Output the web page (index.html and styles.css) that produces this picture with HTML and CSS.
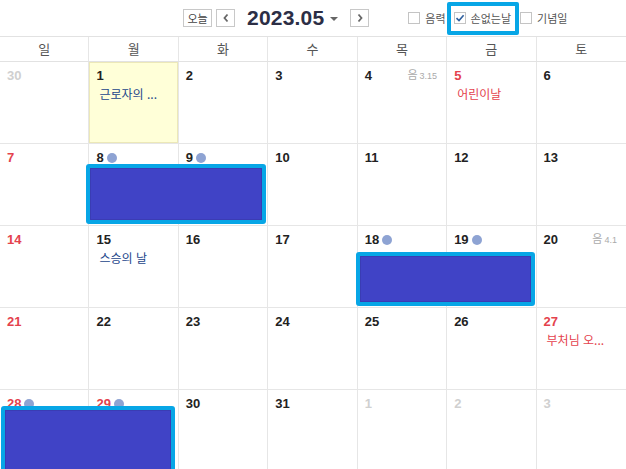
FILE: index.html
```html
<!DOCTYPE html>
<html lang="ko">
<head>
    <meta charset="UTF-8">
    <title>2023.05 달력</title>
    <link rel="stylesheet" href="styles.css">
</head>
<body>
    <div class="toolbar">
        <button class="btn today">오늘</button>
        <button class="btn arrow prev"><svg width="8" height="10" viewBox="0 0 8 10"><path d="M5.5 1.5 L2.5 5 L5.5 8.5" fill="none" stroke="#666" stroke-width="1.8"/></svg></button>
        <span class="title">2023.05</span>
        <span class="caret"></span>
        <button class="btn arrow next"><svg width="8" height="10" viewBox="0 0 8 10"><path d="M2.5 1.5 L5.5 5 L2.5 8.5" fill="none" stroke="#666" stroke-width="1.8"/></svg></button>
        <div class="options">
            <label class="opt"><span class="box"></span>음력</label>
            <label class="opt focus"><span class="box checked">
                <svg width="10" height="10" viewBox="0 0 10 10"><path d="M1.5 5.2 L4 7.6 L8.6 2.2" fill="none" stroke="#2f5f9e" stroke-width="1.6"/></svg>
            </span>손없는날</label>
            <label class="opt"><span class="box"></span>기념일</label>
        </div>
    </div>

    <div class="calendar">
        <div class="week-head">
            <div>일</div><div>월</div><div>화</div><div>수</div><div>목</div><div>금</div><div>토</div>
        </div>
        <div class="grid">
            <div class="cell"><span class="num dim">30</span></div>
            <div class="cell today-cell"><span class="num">1</span><div class="event">근로자의 ...</div></div>
            <div class="cell"><span class="num">2</span></div>
            <div class="cell"><span class="num">3</span></div>
            <div class="cell"><span class="num">4</span><span class="lunar">음<small>3.15</small></span></div>
            <div class="cell"><span class="num red">5</span><div class="event red">어린이날</div></div>
            <div class="cell"><span class="num">6</span></div>

            <div class="cell"><span class="num red">7</span></div>
            <div class="cell"><span class="num">8</span><span class="dot"></span></div>
            <div class="cell"><span class="num">9</span><span class="dot"></span></div>
            <div class="cell"><span class="num">10</span></div>
            <div class="cell"><span class="num">11</span></div>
            <div class="cell"><span class="num">12</span></div>
            <div class="cell"><span class="num">13</span></div>

            <div class="cell"><span class="num red">14</span></div>
            <div class="cell"><span class="num">15</span><div class="event">스승의 날</div></div>
            <div class="cell"><span class="num">16</span></div>
            <div class="cell"><span class="num">17</span></div>
            <div class="cell"><span class="num">18</span><span class="dot"></span></div>
            <div class="cell"><span class="num">19</span><span class="dot"></span></div>
            <div class="cell"><span class="num">20</span><span class="lunar">음<small>4.1</small></span></div>

            <div class="cell"><span class="num red">21</span></div>
            <div class="cell"><span class="num">22</span></div>
            <div class="cell"><span class="num">23</span></div>
            <div class="cell"><span class="num">24</span></div>
            <div class="cell"><span class="num">25</span></div>
            <div class="cell"><span class="num">26</span></div>
            <div class="cell"><span class="num red">27</span><div class="event red">부처님 오...</div></div>

            <div class="cell"><span class="num red">28</span><span class="dot"></span></div>
            <div class="cell"><span class="num red">29</span><span class="dot"></span></div>
            <div class="cell"><span class="num">30</span></div>
            <div class="cell"><span class="num">31</span></div>
            <div class="cell"><span class="num dim">1</span></div>
            <div class="cell"><span class="num dim">2</span></div>
            <div class="cell"><span class="num dim">3</span></div>
        </div>
        <!-- 가려진 일정 -->
        <div class="bar bar1"></div>
        <div class="bar bar2"></div>
        <div class="bar bar3"></div>
    </div>
</body>
</html>
```

FILE: styles.css
```css
body {
    margin: 0;
    font-family: "Noto Sans", "Noto Sans CJK KR", sans-serif;
    color: #222;
    background: #fff;
    overflow: hidden;
}

.toolbar {
    height: 36px;
    display: flex;
    align-items: center;
    padding-left: 183px;
    box-sizing: border-box;
    position: relative;
}

.btn {
    height: 18px;
    border: 1px solid #c8c8c8;
    background: #fff;
    padding: 0;
    font-family: "Noto Sans CJK KR", sans-serif;
    font-size: 11px;
    color: #444;
    line-height: 14px;
    box-sizing: border-box;
}

.today {
    width: 29px;
}

.arrow {
    width: 19px;
    display: flex;
    align-items: center;
    justify-content: center;
}

.prev {
    margin-left: 4px;
}

.title {
    margin-left: 12px;
    font-family: "Liberation Sans", Arial, sans-serif;
    font-size: 21px;
    font-weight: bold;
    color: #2c2e45;
    letter-spacing: 0.2px;
}

.caret {
    width: 0;
    height: 0;
    margin-left: 6px;
    margin-top: 2px;
    border-left: 4px solid transparent;
    border-right: 4px solid transparent;
    border-top: 4px solid #666;
}

.next {
    margin-left: 12px;
}

.options {
    display: flex;
    align-items: center;
    margin-left: 39px;
}

.opt {
    display: flex;
    align-items: center;
    font-family: "Noto Sans CJK KR", sans-serif;
    font-size: 11px;
    color: #555;
    height: 28px;
}

.box {
    width: 12px;
    height: 12px;
    border: 1px solid #c4c4c4;
    box-sizing: border-box;
    background: #fff;
    margin-right: 5px;
    display: flex;
    align-items: center;
    justify-content: center;
}

.focus {
    border: 4px solid #07a6e6;
    border-radius: 2px;
    padding: 0 4px 0 3px;
    margin-left: 1px;
    height: 33px;
    box-sizing: border-box;
}

.opt.focus + .opt {
    margin-left: 1px;
}

.calendar {
    position: relative;
    border-top: 1px solid #e2e2e2;
}

.week-head {
    display: grid;
    grid-template-columns: repeat(7, 1fr);
    height: 24px;
    border-bottom: 1px solid #e2e2e2;
}

.week-head div {
    text-align: center;
    font-family: "Noto Sans CJK KR", sans-serif;
    font-size: 13px;
    color: #555;
    line-height: 24px;
    border-right: 1px solid #e6e6e6;
}

.grid {
    display: grid;
    grid-template-columns: repeat(7, 1fr);
    grid-auto-rows: 82px;
}

.cell {
    border-right: 1px solid #e6e6e6;
    border-bottom: 1px solid #e6e6e6;
    padding: 4px 6px 0 7px;
    line-height: 16px;
    position: relative;
}

.week-head div:nth-child(7),
.cell:nth-child(7n) {
    border-right: none;
}

.today-cell {
    background: #ffffd8;
    box-shadow: inset 0 0 0 1px #ece8b8;
}

.num {
    font-family: "Liberation Sans", Arial, sans-serif;
    font-size: 13px;
    font-weight: bold;
    color: #222;
    vertical-align: middle;
}

.num.red {
    color: #e4424d;
}

.num.dim {
    color: #d0d0d0;
}

.dot {
    display: inline-block;
    width: 10px;
    height: 10px;
    border-radius: 50%;
    background: #8ea3d3;
    margin-left: 3px;
    vertical-align: middle;
}

.lunar {
    position: absolute;
    right: 9px;
    top: 4px;
    font-family: "Noto Sans CJK KR", sans-serif;
    font-size: 11px;
    line-height: 16px;
    color: #aaa;
}

.lunar small {
    font-family: "Liberation Sans", Arial, sans-serif;
    font-size: 9px;
    margin-left: 2px;
}

.event {
    margin-top: 1px;
    padding-left: 3px;
    font-family: "Noto Sans CJK KR", sans-serif;
    font-size: 12px;
    line-height: 18px;
    color: #23468a;
}

.event.red {
    color: #e4424d;
}

.bar {
    position: absolute;
    border: 4px solid #07a6e6;
    border-radius: 3px;
    background: #4043c6;
    box-shadow: inset 0 0 0 1px #3a3cb4;
}

.bar1 {
    left: 86px;
    top: 127px;
    width: 172px;
    height: 52px;
}

.bar2 {
    left: 356px;
    top: 215px;
    width: 171px;
    height: 46px;
}

.bar3 {
    left: 1px;
    top: 369px;
    width: 166px;
    height: 70px;
}
```
